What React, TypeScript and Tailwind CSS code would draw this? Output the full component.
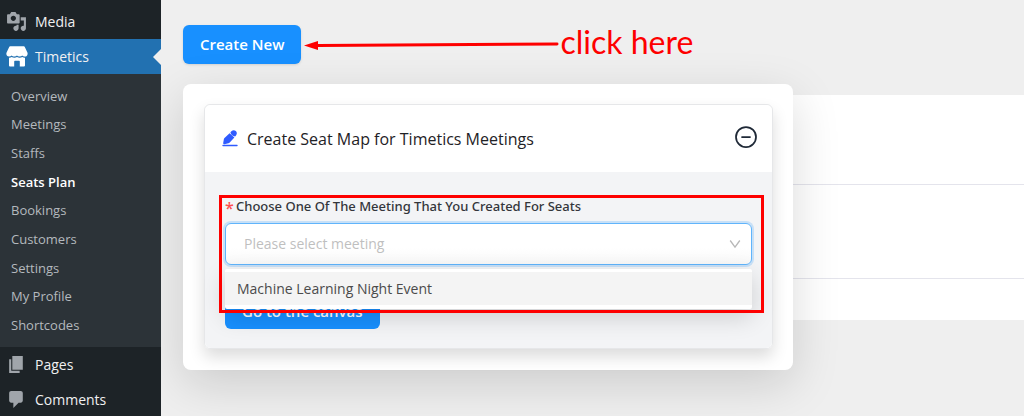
import { useState } from "react";
import type { ReactNode } from "react";
import { CircleMinus } from "lucide-react";

const submenu = [
  "Overview",
  "Meetings",
  "Staffs",
  "Seats Plan",
  "Bookings",
  "Customers",
  "Settings",
  "My Profile",
  "Shortcodes",
];

const rows = ["h-[89px]", "h-[94px]", "h-[42px]"];

const MediaIcon = () => (
  <svg viewBox="0 0 20 20" className="size-[21px] fill-[#a0a5ab]" aria-hidden="true">
    <path d="M13 11V4c0-.55-.45-1-1-1h-1.67L9 1H5L3.67 3H2c-.55 0-1 .45-1 1v7c0 .55.45 1 1 1h10c.55 0 1-.45 1-1zM7 4.5c1.38 0 2.5 1.12 2.5 2.5S8.38 9.5 7 9.5 4.5 8.38 4.5 7 5.62 4.5 7 4.5zM14 6h5v10.5c0 1.38-1.12 2.5-2.5 2.5S14 17.88 14 16.5s1.12-2.5 2.5-2.5c.17 0 .34.02.5.05V9h-3V6zm-4 8.05V13h2v3.5c0 1.38-1.12 2.5-2.5 2.5S7 17.88 7 16.5 8.12 14 9.5 14c.17 0 .34.02.5.05z" />
  </svg>
);

const StoreIcon = () => (
  <svg viewBox="0 0 22 21" className="h-[21px] w-[22px] shrink-0 fill-white" aria-hidden="true">
    <path d="M4.2 0.3h13.6c.5 0 .8.2 1 .6l2.6 5.6c.7 1.8-.3 4-2.5 4.100-1.200 0-2-.4-2.600-1.100-.6.7-1.500 1.100-2.600 1.100s-2.100-.4-2.700-1.100c-.6.7-1.500 1.100-2.600 1.100s-2.100-.4-2.700-1.100c-.6.7-1.500 1.100-2.600 1.100C.8 10.500-.2 8.300.6 6.500L3.200.9c.2-.4.500-.6 1-.6z" />
    <path d="M3 11.800c1 .1 1.900-.2 2.700-.7 1.600 1 3.700 1 5.300 0 1.600 1 3.700 1 5.300 0 .8.500 1.700.8 2.700.7v7.700c0 .5-.4.900-.9.900h-4.300v-5c0-.4-.3-.7-.7-.7H8.900c-.4 0-.7.3-.7.7v5H3.900c-.5 0-.9-.4-.9-.9z" />
  </svg>
);

const PagesIcon = () => (
  <svg viewBox="0 0 20 20" className="size-[21px] fill-[#a0a5ab]" aria-hidden="true">
    <path d="M6 15V2h10v13H6zm-1 1h8v2H3V5h2v11z" />
  </svg>
);

const CommentsIcon = () => (
  <svg viewBox="0 0 20 20" className="size-[21px] fill-[#a0a5ab]" aria-hidden="true">
    <path d="M5 2h9c1.1 0 2 .9 2 2v7c0 1.1-.9 2-2 2h-2l-5 5v-5H5c-1.1 0-2-.9-2-2V4c0-1.1.9-2 2-2z" />
  </svg>
);

const PenIcon = () => (
  <svg viewBox="0 0 16 17" className="h-[17px] w-4 fill-[#2f5bff]" aria-hidden="true">
    <path d="M7.600 3.200l4.800 4.400-4.700 5c-.4.400-.8.600-1.300.7l-4 .9c-.8.100-1.400-.4-1.200-1.200l.7-3.900c.1-.5.300-.9.600-1.200z" />
    <path d="M8.400 2.300l1-1c1.300-1.300 3.100-1.400 4.400-.2s1.400 3 .2 4.400l-.9 1.100c-2.400-.4-4.100-1.900-4.700-4.300z" />
    <rect x="0.300" y="14.800" width="15.400" height="1.500" rx=".7" />
  </svg>
);

const SelectArrow = () => (
  <svg
    viewBox="0 0 12 10"
    className="pointer-events-none absolute top-1/2 right-[11px] h-[10px] w-3 -translate-y-1/2 fill-none stroke-[#b8b8b8]"
    aria-hidden="true"
  >
    <path d="M1.200 1.500L6 8.200l4.800-6.700" strokeWidth="1.300" />
  </svg>
);

interface MenuItemProps {
  icon: ReactNode;
  label: string;
  active?: boolean;
}

function MenuItem({ icon, label, active }: MenuItemProps) {
  return (
    <a
      href="#"
      className={`relative flex h-[35px] items-center gap-2 pl-[6px] text-sm text-[#f0f0f1] ${active ? "bg-[#2271b1]" : ""}`}
    >
      <span className="flex w-[21px] justify-center">{icon}</span>
      {label}
      {active && (
        <span className="absolute top-1/2 right-0 -translate-y-1/2 border-y-[8px] border-r-[8px] border-y-transparent border-r-[#efefef]" />
      )}
    </a>
  );
}

function Sidebar() {
  return (
    <nav className="min-h-screen w-[161px] shrink-0 bg-[#1d2327] pt-1">
      <MenuItem icon={<MediaIcon />} label="Media" />
      <MenuItem icon={<StoreIcon />} label="Timetics" active />
      <ul className="flex h-[273px] flex-col bg-[#2c3338] pt-2 pb-[7px] text-[13px]">
        {submenu.map((item) => (
          <li key={item} className="flex flex-1 items-center pl-[11px]">
            <a href="#" className={item === "Seats Plan" ? "font-semibold text-white" : "text-[#b4b9be]"}>
              {item}
            </a>
          </li>
        ))}
      </ul>
      <MenuItem icon={<PagesIcon />} label="Pages" />
      <MenuItem icon={<CommentsIcon />} label="Comments" />
    </nav>
  );
}

function SeatMapForm() {
  const [meeting, setMeeting] = useState("");

  return (
    <div className="rounded-b-md bg-[#f3f4f6] px-5 pt-6 pb-[19px]">
      <div className="relative">
        <label htmlFor="meeting" className="mb-[7px] flex h-5 gap-1 font-['Noto_Sans',sans-serif] text-[13px] leading-5 font-medium text-[#33363b]">
          <span className="w-[7px] text-base leading-6 text-[#ff4d4f]">*</span>
          Choose One Of The Meeting That You Created For Seats
        </label>
        <div className="relative">
          <select
            id="meeting"
            value={meeting}
            onChange={(e) => setMeeting(e.target.value)}
            className="block h-[42px] w-full appearance-none rounded-md border border-[#60b4fb] bg-linear-to-b from-white from-60% to-[#f8f8f8] px-[18px] text-sm text-[#bfbfbf] shadow-[0_0_0_2px_rgba(24,144,255,0.2)] outline-none"
          >
            <option value="">Please select meeting</option>
            <option value="night">Machine Learning Night Event</option>
          </select>
          <SelectArrow />
          <ul className="absolute top-full right-0 left-0 z-10 mt-1 rounded-xs bg-white pt-[3px] pb-1 shadow-[0_8px_24px_rgba(0,0,0,0.16)]">
            <li className="bg-[#f4f4f4] px-3 text-sm leading-[33px] text-[#4b4b4b]">Machine Learning Night Event</li>
          </ul>
        </div>
        {/* highlight frame around the field and its open list */}
        <div className="pointer-events-none absolute -top-px -right-3 -bottom-12 -left-[6px] z-20 border-3 border-[#fe0000]" />
      </div>
      <button type="button" className="mt-[25px] h-[39px] rounded-md bg-[#1890ff] px-[17px] pt-1 text-[15px] font-semibold text-white">
        Go to the canvas
      </button>
    </div>
  );
}

export default function App() {
  return (
    <div className="flex min-h-screen bg-[#efefef] font-['Open_Sans',sans-serif]">
      <Sidebar />
      <main className="min-w-0 flex-1 overflow-hidden pt-[25px] pl-[22px]">
        <div className="flex items-center">
          <button type="button" className="h-[39px] rounded-md bg-[#1890ff] px-[17px] text-[15px] font-semibold text-white shadow-sm">
            Create New
          </button>
          <svg viewBox="0 0 256 12" className="ml-[3px] h-3 w-64" aria-hidden="true">
            <path d="M14 6.500L253 5" stroke="#fe0000" strokeWidth="3" strokeLinecap="round" />
            <path d="M0 6.500L14 2v9z" fill="#fe0000" />
          </svg>
          <span className="pb-[6px] font-['Lato',sans-serif] text-[32px] leading-8 text-[#fe0000]">click here</span>
        </div>

        <div className="mt-5 grid grid-cols-1">
          <table className="col-start-1 row-start-1 mt-[11px] w-full self-start bg-white">
            <tbody>
              {rows.map((height) => (
                <tr key={height} className="border-b border-[#e4e4ec] last:border-0">
                  <td className={height} />
                </tr>
              ))}
            </tbody>
          </table>

          <section className="relative col-start-1 row-start-1 w-full max-w-[610px] self-start rounded-lg bg-white pt-5 pr-5 pb-[21px] pl-[21px] shadow-[0_14px_48px_rgba(0,0,0,0.15)]">
            <div className="rounded-md border border-[#e6e7e9] shadow-[0_8px_16px_rgba(0,0,0,0.14)]">
              <header className="flex h-[67px] items-center rounded-t-md bg-white pr-[14px] pl-[17px]">
                <PenIcon />
                <h2 className="ml-[9px] text-base text-[#1f2226]">Create Seat Map for Timetics Meetings</h2>
                <button type="button" aria-label="Collapse" className="mb-1 ml-auto">
                  <CircleMinus className="size-6 text-[#1f2937]" strokeWidth={1.75} />
                </button>
              </header>
              <SeatMapForm />
            </div>
          </section>
        </div>
      </main>
    </div>
  );
}
